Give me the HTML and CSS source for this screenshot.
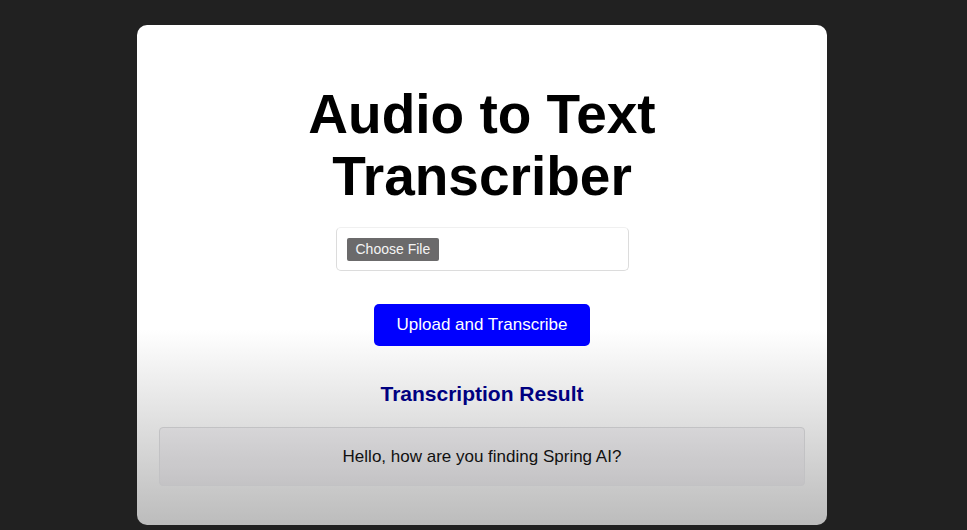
FILE: index.html
```html
<!DOCTYPE html>
<html lang="en">
<head>
<meta charset="utf-8">
<title>Audio to Text Transcriber</title>
<link rel="stylesheet" href="styles.css">
</head>
<body>
  <main class="card">
    <h1 class="title">Audio to Text Transcriber</h1>
    <div class="file-box">
      <span class="file-btn">Choose File</span>
    </div>
    <button class="upload-btn" type="button">Upload and Transcribe</button>
    <h2 class="result-title">Transcription Result</h2>
    <div class="result-box">Hello, how are you finding Spring AI?</div>
  </main>
</body>
</html>
```
FILE: styles.css
```css
html, body {
  margin: 0;
  padding: 0;
}

body {
  background: #212121;
  font-family: "Liberation Sans", Arial, sans-serif;
  height: 530px;
  overflow: hidden;
}

.card {
  box-sizing: border-box;
  width: 690px;
  height: 500px;
  margin: 25px 0 0 137px;
  padding: 58px 22px 0;
  border-radius: 10px;
  background: linear-gradient(to bottom, #ffffff 0%, #ffffff 61%, #bcbcbc 100%);
  display: flex;
  flex-direction: column;
  align-items: center;
}

.title {
  margin: 0;
  width: 560px;
  font-size: 55px;
  font-weight: bold;
  color: #000;
  text-align: center;
  line-height: 62px;
}

.file-box {
  box-sizing: border-box;
  width: 293px;
  height: 44px;
  margin-top: 20px;
  padding: 10px;
  border: 1px solid #dcdcdc;
  border-top-color: #f0f0f0;
  border-radius: 5px;
  display: flex;
  align-items: flex-start;
}

.file-btn {
  display: inline-block;
  background: #6b6a6b;
  color: #f4f4f4;
  font-size: 14px;
  line-height: 17px;
  padding: 3px 9px;
  border-radius: 2px;
}

.upload-btn {
  margin-top: 33px;
  width: 216px;
  height: 42px;
  border: none;
  border-radius: 5px;
  background: #0000ff;
  color: #ffffff;
  font-family: "Liberation Sans", Arial, sans-serif;
  font-size: 17px;
  padding: 0;
}

.result-title {
  margin: 36px 0 0;
  font-size: 21px;
  line-height: 24px;
  font-weight: bold;
  color: #000080;
}

.result-box {
  box-sizing: border-box;
  align-self: stretch;
  height: 59px;
  margin-top: 21px;
  border: 1px solid #c2c2c4;
  border-radius: 4px;
  background: rgba(70, 50, 100, 0.045);
  color: #111;
  font-size: 17px;
  display: flex;
  align-items: center;
  justify-content: center;
}
```
